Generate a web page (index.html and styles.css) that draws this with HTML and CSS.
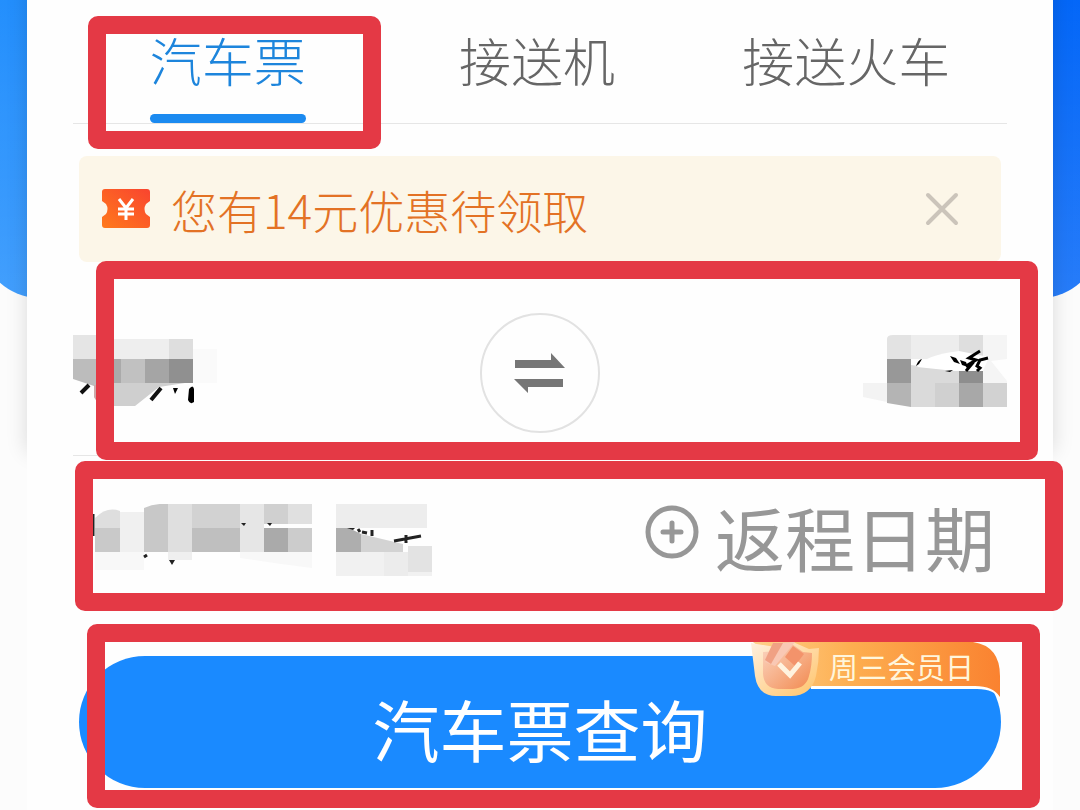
FILE: index.html
```html
<!DOCTYPE html>
<html lang="zh-CN">
<head>
  <meta charset="UTF-8">
  <meta name="viewport" content="width=device-width, initial-scale=1">
  <title>汽车票</title>
  <link rel="stylesheet" href="styles.css">
</head>
<body>
  <div class="backdrop">
    <div class="hero"></div>
    <div class="shade"></div>
  </div>

  <main class="card">
    <nav class="tabs">
      <button class="tab active" type="button">汽车票</button>
      <button class="tab" type="button">接送机</button>
      <button class="tab" type="button">接送火车</button>
      <span class="mark mark-tab"></span>
    </nav>

    <div class="promo">
      <svg class="ticket" viewBox="0 0 50 40" width="50" height="40" aria-hidden="true">
        <defs>
          <linearGradient id="ticketFill" x1="0" y1="1" x2="1" y2="0">
            <stop offset="0" stop-color="#ff7a1c"/>
            <stop offset="1" stop-color="#f9442f"/>
          </linearGradient>
        </defs>
        <path fill="url(#ticketFill)" d="M4 0H46Q49 0 49 3V12L45 15Q42 20 45 25L49 28V36Q49 39 46 39H4Q1 39 1 36V28L5 25Q8 20 5 15L1 12V3Q1 0 4 0Z"/>
        <path fill="none" stroke="#fff" stroke-width="3" d="M18 10l7 9 7-9M25 19v12M17 20h16M17 25h16"/>
      </svg>
      <span class="promo-text">您有14元优惠待领取</span>
      <button class="close" type="button" aria-label="关闭">
        <svg viewBox="0 0 34 34" width="34" height="34"><path fill="none" stroke="#cbc4ba" stroke-width="4" stroke-linecap="round" d="M3 3L31 31M31 3L3 31"/></svg>
      </button>
    </div>

    <section class="route">
      <button class="city" type="button" aria-label="出发地">
        <svg viewBox="0 0 144 76" width="144" height="76">
          <path fill="#e5e5e5" d="M0 0H24V24H0z"/>
          <path fill="#eee" d="M24 4H96V24H24z"/>
          <path fill="#dedede" d="M96 4H120V24H96z"/>
          <path fill="#bcbcbc" d="M0 24H24V52L0 44z"/>
          <path fill="#aaa" d="M24 24H48V48H24z"/>
          <path fill="#c1c1c1" d="M48 24H72V48H48z"/>
          <path fill="#a5a5a5" d="M72 24H96V48H72z"/>
          <path fill="#909090" d="M96 24H120V48H96z"/>
          <path fill="#fafafa" d="M120 14H144V48H120z"/>
          <path fill="#cfcfcf" d="M24 48H112L86 52 62 71H38L24 68z"/>
          <path fill="none" stroke="#111" stroke-width="4" d="M16 50L8 58M88 53L78 65"/>
          <path fill="none" stroke="#caa" stroke-width="2" d="M22 50v12l4 6"/>
          <path fill="#000" d="M100 53h5l-3 6zM116 54q4-5 5 0v13q-4 3-6-2z"/>
        </svg>
      </button>
      <button class="swap" type="button" aria-label="交换">
        <svg viewBox="0 0 52 42" width="52" height="42"><path fill="#767676" d="M1 8H37V1L51 16H1zM49 35H14V41L0 27H49z"/></svg>
      </button>
      <button class="city" type="button" aria-label="目的地">
        <svg viewBox="0 0 144 76" width="144" height="76">
          <path fill="#e3e3e3" d="M24 4q0-4 6-4H48V24H24z"/>
          <path fill="#ededed" d="M48 0H96V24H48z"/>
          <path fill="#dedede" d="M96 0H120V24H96z"/>
          <path fill="#f5f5f5" d="M120 0H144V24L128 26 144 46V48H120z"/>
          <path fill="#dadada" d="M48 30L96 36V48H48z"/>
          <path fill="#989898" d="M24 24H48V48H24z"/>
          <path fill="#f3f3f3" d="M0 48H24V67L0 62z"/>
          <path fill="#b4b4b4" d="M24 48H48V72L24 68z"/>
          <path fill="#dadada" d="M48 48H72V72H48z"/>
          <path fill="#d0d0d0" d="M72 48H96V72H72z"/>
          <path fill="#8e8e8e" d="M96 34H120V48H96z"/>
          <path fill="#a8a8a8" d="M96 48H120V72H96z"/>
          <path fill="#d2d2d2" d="M120 48H144V72H120z"/>
          <path fill="#fff" d="M54 32Q62 20 96 16L126 22 120 36H92z"/>
          <path fill="#000" d="M53 31q2-6 6-7l-3 5zM87 21l6 2 4 6-6-2zM97 25l6 2 2 5-6-2zM82 36l8-1-3 2z"/>
          <path fill="none" stroke="#000" stroke-width="3" d="M117 16L106 23 113 25 103 31 108 30 103 36M125 23L117 25 114 31 117 33 114 36"/>
        </svg>
      </button>
      <span class="mark mark-route"></span>
    </section>

    <section class="dates">
      <button class="depart" type="button" aria-label="出发日期">
        <svg viewBox="0 0 344 76" width="344" height="76">
          <path fill="#dedede" d="M4 24V14Q16 2 29 7V24z"/>
          <path fill="#f0f0f0" d="M29 8H53V48H29z"/>
          <path fill="#c9c9c9" d="M4 24H29V48H4z"/>
          <path fill="#c8c8c8" d="M53 4Q64-1 77 0V48H53z"/>
          <path fill="#dfdfdf" d="M77 0H101V48H77z"/>
          <path fill="#d2d2d2" d="M101 0H149V24H101z"/>
          <path fill="#bfbfbf" d="M101 24H149V48H101z"/>
          <path fill="#e6e6e6" d="M149 0H173V48H149z"/>
          <path fill="#d0d0d0" d="M173 0H197V20H173z"/>
          <path fill="#aaa" d="M173 24H197V48H173z"/>
          <path fill="#e0e0e0" d="M197 0H221V20H197z"/>
          <path fill="#ccc" d="M197 24H221V48H197z"/>
          <path fill="#f8f8f8" d="M4 48H53V66H4zM149 48H221V64L190 60 149 54z"/>
          <path fill="#efefef" d="M77 48H101V56H77z"/>
          <path fill="#ededed" d="M245 0H336V24H245z"/>
          <path fill="#aeaeae" d="M245 24H258L270 30V48H245z"/>
          <path fill="#d3d3d3" d="M270 30L312 40V48H270z"/>
          <path fill="#f1f1f1" d="M245 48H341V72H245z"/>
          <path fill="#ececec" d="M293 48H317V72H293z"/>
          <path fill="#e3e3e3" d="M317 42H341V68H317z"/>
          <path fill="none" stroke="#222" stroke-width="3" d="M2 10V32M303 37L330 32M315 31V39M281 26v6M267 25l2 3M271 28l5 1M53 53l3-2"/>
          <path fill="#222" d="M150 19h5l-2 3zM176 19h5l-2 3zM78 56h6l-3 5zM256 24h8l-2 2z"/>
        </svg>
      </button>
      <button class="return" type="button">
        <svg viewBox="0 0 54 54" width="54" height="54" aria-hidden="true">
          <circle cx="27" cy="27" r="24" fill="none" stroke="#979797" stroke-width="5"/>
          <path fill="none" stroke="#979797" stroke-width="5" stroke-linecap="round" d="M27 18V36M18 27H36"/>
        </svg>
        <span>返程日期</span>
      </button>
      <span class="mark mark-dates"></span>
    </section>

    <div class="submit">
      <button class="search" type="button">汽车票查询</button>
      <span class="badge">
        <svg viewBox="0 0 250 60" width="250" height="60" aria-hidden="true">
          <defs>
            <linearGradient id="badgeFill">
              <stop offset="0" stop-color="#ffd08a"/>
              <stop offset="0.4" stop-color="#fdae50"/>
              <stop offset="1" stop-color="#fa8230"/>
            </linearGradient>
            <linearGradient id="cupFill" x1="0" y1="0" x2="1" y2="1">
              <stop offset="0" stop-color="#fbd6c2"/>
              <stop offset="1" stop-color="#f28a50"/>
            </linearGradient>
            <linearGradient id="cupEdge" x1="0" y1="0" x2="1" y2="1">
              <stop offset="0" stop-color="#fff0df"/>
              <stop offset="1" stop-color="#ffc46a"/>
            </linearGradient>
          </defs>
          <path fill="#fff" d="M50 2H222Q249 8 249 38V60Q244 49 226 49H60z"/>
          <path fill="url(#badgeFill)" d="M2 2H222Q249 6 249 36V57Q242 46 224 46H50z"/>
          <path fill="url(#cupEdge)" d="M0 3L24 7 42 2 58 9 68 8Q68 22 65 36Q60 56 40 56H25Q7 56 4 36z"/>
          <path fill="url(#cupFill)" d="M12 12L27 11 41 4 52 12 61 13Q61 26 58 36Q55 48 42 49H27Q13 48 12 34z"/>
          <path fill="#f9c8b4" d="M22 3L44 2 24 26 14 22z"/>
          <path fill="#f0a184" d="M22 3H32L20 24 14 20z"/>
          <path fill="#f3936b" d="M42 6L53 14 44 26 34 17z"/>
          <path fill="none" stroke="#fff3df" stroke-width="5" d="M28 24L39 35 49 23"/>
        </svg>
        <span class="badge-text">周三会员日</span>
      </span>
      <span class="mark mark-submit"></span>
    </div>
  </main>
</body>
</html>
```
FILE: styles.css
```css
* {
  box-sizing: border-box;
}
body {
  margin: 0;
  background: #fcfcfc;
  font-family: "Noto Sans CJK SC", sans-serif;
  font-weight: 300;
}
button {
  margin: 0;
  padding: 0;
  border: none;
  background: none;
  font: inherit;
  color: inherit;
  cursor: pointer;
}
svg {
  display: block;
}

/* blue backdrop behind the card */
.backdrop {
  position: absolute;
  top: 0;
  left: 0;
  right: 0;
  height: 480px;
  overflow: hidden;
}
.hero {
  height: 298px;
  margin: 0 -20px;
  border-radius: 0 0 60px 60px;
  background:
    linear-gradient(to bottom, rgba(255, 255, 255, 0), rgba(255, 255, 255, 0.14)),
    linear-gradient(to right, #2490fd, #0366f8);
}
.shade {
  position: absolute;
  top: -20px;
  left: 27px;
  right: 27px;
  bottom: 28px;
  box-shadow: 0 0 20px rgba(0, 0, 0, 0.14);
}
.card {
  position: relative;
  min-height: 100vh;
  margin: 0 27px;
  padding: 0 46px 22px;
  background: #fefefe;
}

/* red frames drawn over the page */
.mark {
  position: absolute;
  border: 18px solid #e43945;
  border-radius: 10px;
  pointer-events: none;
}
.mark-tab {
  top: 16px;
  left: 15px;
  width: 293px;
  height: 133px;
}
.mark-route {
  top: -1px;
  left: 23px;
  right: -31px;
  bottom: -5px;
}
.mark-dates {
  top: 5px;
  left: 2px;
  right: -56px;
  bottom: 7px;
}
.mark-submit {
  top: -32px;
  left: 14px;
  right: -33px;
  bottom: -20px;
}

.tabs {
  position: relative;
  display: grid;
  grid-template-columns: repeat(3, 1fr);
  justify-items: center;
  height: 124px;
  padding-right: 6px;
  border-bottom: 1px solid #e6e6e6;
}
.tab {
  position: relative;
  padding-bottom: 4px;
  font-size: 52px;
  line-height: 60px;
  color: #666;
}
.tab.active {
  color: #1d85dc;
}
.tab.active::after {
  content: "";
  position: absolute;
  left: 0;
  right: 0;
  bottom: 0;
  height: 9px;
  border-radius: 5px;
  background: #1b8af0;
}

.promo {
  display: flex;
  align-items: center;
  height: 106px;
  margin: 32px 6px 0;
  padding: 0 42px 0 22px;
  border-radius: 8px;
  background: #fcf6e8;
}
.promo-text {
  flex: 1;
  margin-left: 20px;
  font-size: 46px;
  line-height: 60px;
  color: #e37225;
}

.route {
  position: relative;
  display: flex;
  align-items: center;
  justify-content: space-between;
  height: 194px;
  padding-top: 28px;
  border-bottom: 1px solid #e6e6e6;
}
.swap {
  display: flex;
  align-items: center;
  justify-content: center;
  width: 120px;
  height: 120px;
  border: 2px solid #e2e2e2;
  border-radius: 50%;
}

.dates {
  position: relative;
  display: flex;
  align-items: center;
  justify-content: space-between;
  height: 162px;
  padding: 0 12px 0 18px;
}
.depart {
  padding-top: 10px;
}
.return {
  display: flex;
  align-items: flex-start;
  gap: 16px;
  font-size: 70px;
  font-weight: 400;
  line-height: 80px;
  color: #979797;
}
.return svg {
  margin-top: 8px;
}

.submit {
  position: relative;
  margin-top: 38px;
  padding: 0 6px;
}
.search {
  display: block;
  width: 100%;
  height: 132px;
  padding-top: 12px;
  border-radius: 66px;
  background: #1a8aff;
  font-size: 67px;
  font-weight: 400;
  line-height: 80px;
  color: #fff;
}
.badge {
  position: absolute;
  top: -16px;
  right: 6px;
  width: 250px;
}
.badge-text {
  position: absolute;
  top: 6px;
  left: 78px;
  font-size: 29px;
  font-weight: 400;
  line-height: 40px;
  color: #fff6dc;
  white-space: nowrap;
}
```
